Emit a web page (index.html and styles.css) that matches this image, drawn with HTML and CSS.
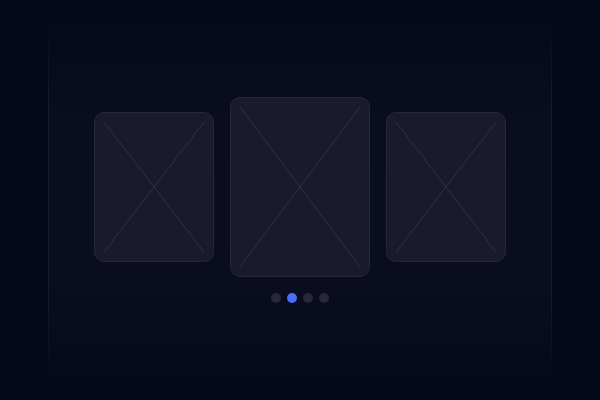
FILE: index.html
```html
<!DOCTYPE html>
<html>
<head>
<meta charset="utf-8">
<link rel="stylesheet" href="styles.css">
</head>
<body>
<main class="stage">
  <div class="carousel">
    <div class="slide">
      <svg class="ph" viewBox="0 0 100 100" preserveAspectRatio="none"><line x1="0" y1="0" x2="100" y2="100"/><line x1="100" y1="0" x2="0" y2="100"/></svg>
    </div>
    <div class="slide slide-active">
      <svg class="ph" viewBox="0 0 100 100" preserveAspectRatio="none"><line x1="0" y1="0" x2="100" y2="100"/><line x1="100" y1="0" x2="0" y2="100"/></svg>
    </div>
    <div class="slide">
      <svg class="ph" viewBox="0 0 100 100" preserveAspectRatio="none"><line x1="0" y1="0" x2="100" y2="100"/><line x1="100" y1="0" x2="0" y2="100"/></svg>
    </div>
  </div>
  <div class="dots">
    <span class="dot"></span>
    <span class="dot dot-active"></span>
    <span class="dot"></span>
    <span class="dot"></span>
  </div>
</main>
</body>
</html>
```
FILE: styles.css
```css
html, body {
  margin: 0;
  padding: 0;
  background: #05071a;
  font-family: "Inter", "Liberation Sans", sans-serif;
}
.stage {
  box-sizing: border-box;
  width: 504px;
  height: 400px;
  margin: 0 auto;
  display: flex;
  flex-direction: column;
  align-items: center;
  justify-content: center;
  gap: 16px;
  border-left: 1px solid transparent;
  border-right: 1px solid transparent;
  border-image: linear-gradient(to bottom, rgba(255,255,255,0) 5%, rgba(120,125,170,0.14) 30%, rgba(120,125,170,0.14) 70%, rgba(255,255,255,0) 95%) 1;
  background: linear-gradient(to bottom, #05071a 0%, #0a0c20 30%, #0b0d21 55%, #090b1e 80%, #05071a 100%);
}
.carousel {
  display: flex;
  align-items: center;
  gap: 16px;
}
.slide {
  box-sizing: border-box;
  width: 120px;
  height: 150px;
  padding: 9px;
  border-radius: 10px;
  background: #191a2c;
  border: 1px solid #25263a;
  display: flex;
}
.slide-active {
  width: 140px;
  height: 180px;
}
.ph {
  width: 100%;
  height: 100%;
  display: block;
}
.ph line {
  stroke: #30314a;
  stroke-width: 1;
  vector-effect: non-scaling-stroke;
}
.dots {
  display: flex;
  gap: 6px;
}
.dot {
  width: 10px;
  height: 10px;
  border-radius: 50%;
  background: #262839;
}
.dot-active {
  background: #4a6cf7;
}
```
